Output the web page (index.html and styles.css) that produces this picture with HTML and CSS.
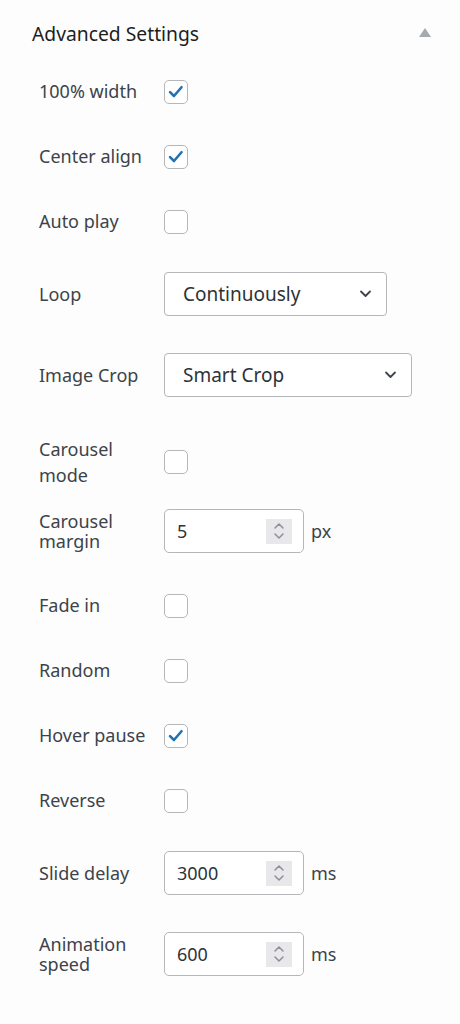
FILE: index.html
```html
<!DOCTYPE html>
<html>
<head>
<meta charset="utf-8">
<link rel="stylesheet" href="styles.css">
</head>
<body>
<div class="panel">
  <div class="header">
    <span class="title">Advanced Settings</span>
    <span class="caret"></span>
  </div>

  <div class="row cb-row"><span class="label">100% width</span><span class="checkbox checked"><svg viewBox="0 0 24 24" width="22" height="22"><path d="M5.5 12.2 L9.8 16.4 L18 6.8" fill="none" stroke="#2271b1" stroke-width="2.8" stroke-linecap="round" stroke-linejoin="round"/></svg></span></div>
  <div class="row cb-row"><span class="label">Center align</span><span class="checkbox checked"><svg viewBox="0 0 24 24" width="22" height="22"><path d="M5.5 12.2 L9.8 16.4 L18 6.8" fill="none" stroke="#2271b1" stroke-width="2.8" stroke-linecap="round" stroke-linejoin="round"/></svg></span></div>
  <div class="row cb-row"><span class="label">Auto play</span><span class="checkbox"></span></div>

  <div class="row sel-row"><span class="label">Loop</span><div class="select loop"><span>Continuously</span><svg class="chev" viewBox="0 0 12 8" width="13" height="8"><path d="M1.5 1.5 L6 6 L10.5 1.5" fill="none" stroke="#3c434a" stroke-width="1.8" stroke-linecap="round" stroke-linejoin="round"/></svg></div></div>
  <div class="row sel-row"><span class="label">Image Crop</span><div class="select crop"><span>Smart Crop</span><svg class="chev" viewBox="0 0 12 8" width="13" height="8"><path d="M1.5 1.5 L6 6 L10.5 1.5" fill="none" stroke="#3c434a" stroke-width="1.8" stroke-linecap="round" stroke-linejoin="round"/></svg></div></div>

  <div class="row two-row"><span class="label tall">Carousel<br>mode</span><span class="checkbox"></span></div>
  <div class="row num-row first"><span class="label tight">Carousel<br>margin</span><div class="number"><span class="val">5</span><span class="spin"><svg viewBox="0 0 14 24" width="14" height="24"><path d="M3 9 L7 5 L11 9" fill="none" stroke="#8c8f94" stroke-width="1.5" stroke-linecap="round" stroke-linejoin="round"/><path d="M3 15 L7 19 L11 15" fill="none" stroke="#8c8f94" stroke-width="1.5" stroke-linecap="round" stroke-linejoin="round"/></svg></span></div><span class="unit">px</span></div>

  <div class="row cb-row"><span class="label">Fade in</span><span class="checkbox"></span></div>
  <div class="row cb-row"><span class="label">Random</span><span class="checkbox"></span></div>
  <div class="row cb-row"><span class="label">Hover pause</span><span class="checkbox checked"><svg viewBox="0 0 24 24" width="22" height="22"><path d="M5.5 12.2 L9.8 16.4 L18 6.8" fill="none" stroke="#2271b1" stroke-width="2.8" stroke-linecap="round" stroke-linejoin="round"/></svg></span></div>
  <div class="row cb-row"><span class="label">Reverse</span><span class="checkbox"></span></div>

  <div class="row num-row"><span class="label">Slide delay</span><div class="number"><span class="val">3000</span><span class="spin"><svg viewBox="0 0 14 24" width="14" height="24"><path d="M3 9 L7 5 L11 9" fill="none" stroke="#8c8f94" stroke-width="1.5" stroke-linecap="round" stroke-linejoin="round"/><path d="M3 15 L7 19 L11 15" fill="none" stroke="#8c8f94" stroke-width="1.5" stroke-linecap="round" stroke-linejoin="round"/></svg></span></div><span class="unit">ms</span></div>
  <div class="row num-row"><span class="label tight">Animation<br>speed</span><div class="number"><span class="val">600</span><span class="spin"><svg viewBox="0 0 14 24" width="14" height="24"><path d="M3 9 L7 5 L11 9" fill="none" stroke="#8c8f94" stroke-width="1.5" stroke-linecap="round" stroke-linejoin="round"/><path d="M3 15 L7 19 L11 15" fill="none" stroke="#8c8f94" stroke-width="1.5" stroke-linecap="round" stroke-linejoin="round"/></svg></span></div><span class="unit">ms</span></div>
</div>
</body>
</html>
```
FILE: styles.css
```css
html, body {
  margin: 0;
  padding: 0;
  background: #fdfdfd;
}
body {
  font-family: "Noto Sans", "Open Sans", sans-serif;
  color: #3c434a;
  width: 460px;
  height: 1024px;
}
.panel {
  display: flex;
  flex-direction: column;
}
.header {
  display: flex;
  align-items: center;
  justify-content: space-between;
  height: 28px;
  padding: 20px 29px 11px 32px;
}
.title {
  font-size: 19.3px;
  line-height: 28px;
  color: #1e1e1e;
}
.caret {
  width: 0;
  height: 0;
  border-left: 6px solid transparent;
  border-right: 6px solid transparent;
  border-bottom: 9px solid #a7aaad;
  margin-top: -3px;
}
.row {
  display: flex;
  align-items: center;
  padding-left: 39px;
}
.label {
  width: 125px;
  flex: none;
  font-size: 18px;
  line-height: 25px;
  color: #3c434a;
}
.label.tall { line-height: 26px; }
.label.tight { line-height: 20px; }
.cb-row {
  padding-top: 20px;
  padding-bottom: 20px;
  min-height: 25px;
}
.sel-row {
  padding-top: 18px;
  padding-bottom: 19px;
}
.two-row {
  padding-top: 20px;
  padding-bottom: 20px;
}
.num-row {
  padding-top: 18px;
  padding-bottom: 19px;
}
.num-row.first {
  padding-top: 1px;
  padding-bottom: 20px;
}
.checkbox {
  box-sizing: border-box;
  width: 24px;
  height: 24px;
  border: 1.5px solid #b4b6b9;
  border-radius: 5px;
  background: #fff;
  display: flex;
  align-items: center;
  justify-content: center;
}
.select {
  box-sizing: border-box;
  height: 44px;
  border: 1px solid #b4b6b9;
  border-radius: 4px;
  background: #fff;
  display: flex;
  align-items: center;
  justify-content: space-between;
  padding: 0 14px 0 18px;
  font-size: 19px;
  color: #2c3338;
}
.select.loop { width: 223px; }
.select.crop { width: 248px; }
.number {
  box-sizing: border-box;
  width: 140px;
  height: 44px;
  border: 1px solid #b4b6b9;
  border-radius: 5px;
  background: #fff;
  display: flex;
  align-items: center;
  justify-content: space-between;
  padding: 0 11px 0 12px;
  font-size: 18px;
  color: #2c3338;
}
.spin {
  width: 26px;
  height: 25px;
  background: #e8e8eb;
  display: flex;
  align-items: center;
  justify-content: center;
}
.unit {
  margin-left: 7px;
  font-size: 18px;
  color: #3c434a;
}
```
